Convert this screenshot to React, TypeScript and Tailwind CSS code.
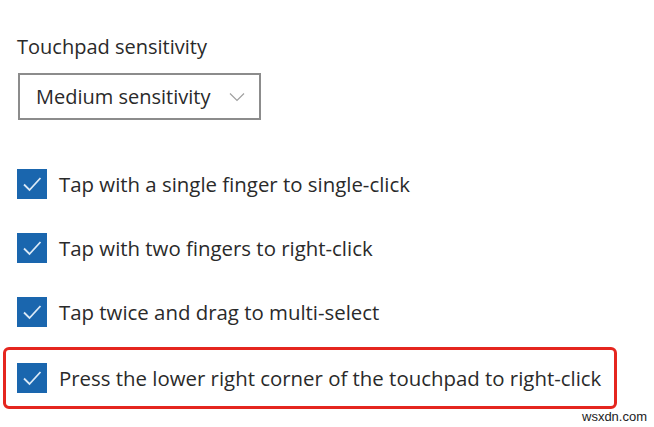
import React from 'react';

const options = [
  'Tap with a single finger to single-click',
  'Tap with two fingers to right-click',
  'Tap twice and drag to multi-select',
];

const Check: React.FC = () => (
  <div className="flex items-center justify-center w-[30px] h-[30px] bg-[#1a66ae] shrink-0">
    <svg width="22" height="22" viewBox="0 0 22 22" fill="none">
      <path d="M3 11.5l5.5 5.5L19.5 5" stroke="#dbe9f6" strokeWidth="1.8" />
    </svg>
  </div>
);

const Row: React.FC<{ label: string }> = ({ label }) => (
  <div className="flex items-center h-[64px]">
    <Check />
    <span className="ml-[12px] text-[20.4px] text-[#2a2a2a]">{label}</span>
  </div>
);

export default function App() {
  return (
    <div
      className="relative w-[654px] h-[427px] bg-white overflow-hidden"
      style={{ fontFamily: '"Open Sans", "Noto Sans", sans-serif' }}
    >
      <div className="pl-[17px] pt-[33px] flex flex-col">
        <p className="text-[20px] leading-[27px] text-[#2a2a2a]">Touchpad sensitivity</p>

        <div className="mt-[13px] ml-[1px] w-[243px] h-[47px] border-2 border-[#8c8c8c] flex items-center justify-between pl-[16px] pr-[14px]">
          <span className="text-[20px] text-[#2a2a2a]">Medium sensitivity</span>
          <svg width="16" height="10" viewBox="0 0 16 10" fill="none">
            <path d="M1 1.5l7 7 7-7" stroke="#a0a0a0" strokeWidth="1.2" />
          </svg>
        </div>

        <div className="mt-[32px] flex flex-col">
          {options.map((o, i) => (
            <Row key={i} label={o} />
          ))}
          <div className="mt-[3px] -ml-[14px] w-[614px] h-[62px] border-[3px] border-[#e5261f] rounded-[6px] flex items-center pl-[11px]">
            <Check />
            <span className="ml-[12px] text-[20.4px] text-[#2a2a2a]">
              Press the lower right corner of the touchpad to right-click
            </span>
          </div>
        </div>
      </div>

      <span
        className="absolute left-[582px] top-[409px] text-[13px] leading-[16px] text-[#222]"
        style={{ fontFamily: '"Liberation Sans", Arial, sans-serif' }}
      >
        wsxdn.com
      </span>
    </div>
  );
}
